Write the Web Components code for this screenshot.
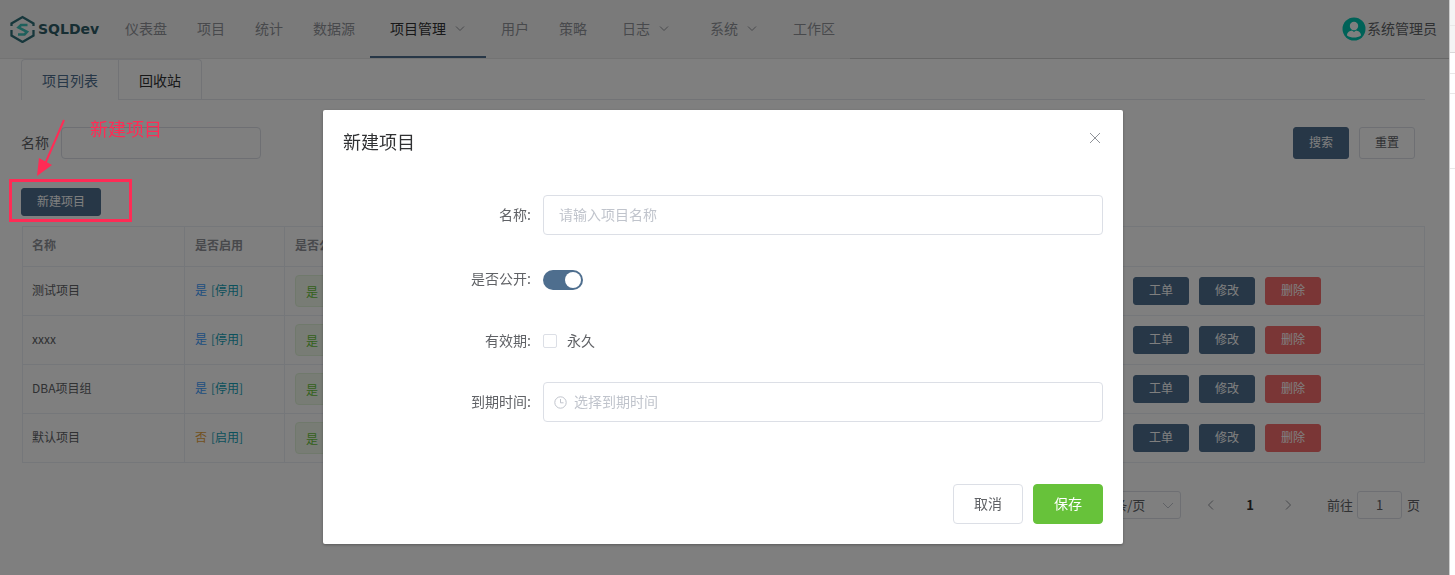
<!DOCTYPE html>
<html lang="zh">
<head>
<meta charset="utf-8">
<title>SQLDev</title>
<style>
  html, body { margin: 0; height: 100%; overflow: hidden; background: #fff; }
  body {
    display: flex;
    font-family: "Noto Sans CJK SC", "Liberation Sans", sans-serif;
    font-size: 14px;
    color: #606266;
  }
  main { width: 1449px; flex: none; }
</style>
</head>
<body>
<main>
  <app-header>
    <nav-item>仪表盘</nav-item>
    <nav-item>项目</nav-item>
    <nav-item>统计</nav-item>
    <nav-item>数据源</nav-item>
    <nav-item active arrow>项目管理</nav-item>
    <nav-item>用户</nav-item>
    <nav-item>策略</nav-item>
    <nav-item arrow>日志</nav-item>
    <nav-item arrow>系统</nav-item>
    <nav-item>工作区</nav-item>
  </app-header>
  <tab-bar></tab-bar>
  <filter-bar></filter-bar>
  <div style="margin:29px 0 10px 21px;height:28px"><ui-button kind="primary" size="small">新建项目</ui-button></div>
  <project-table>
    <project-row name="测试项目" enabled></project-row>
    <project-row name="xxxx" enabled></project-row>
    <project-row name="DBA项目组" enabled></project-row>
    <project-row name="默认项目"></project-row>
  </project-table>
  <pager-bar></pager-bar>
</main>
<page-edge></page-edge>

<modal-dialog heading="新建项目">
  <form-row label="名称:" gap="24"><text-field placeholder="请输入项目名称"></text-field></form-row>
  <form-row label="是否公开:" gap="22"><toggle-switch></toggle-switch></form-row>
  <form-row label="有效期:" gap="21"><check-box>永久</check-box></form-row>
  <form-row label="到期时间:" gap="0"><text-field placeholder="选择到期时间" clock></text-field></form-row>
  <ui-button slot="footer" kind="plain" size="large">取消</ui-button>
  <ui-button slot="footer" kind="success" size="large">保存</ui-button>
</modal-dialog>

<note-callout></note-callout>

<script>
const chevron = (points) => `<svg width="12" height="12" viewBox="0 0 12 12" fill="none" stroke="currentColor" stroke-width="1"><polyline points="${points}"/></svg>`;

class AppHeader extends HTMLElement {
  constructor() {
    super();
    this.attachShadow({ mode: "open" });
  }

  connectedCallback() {
    this.shadowRoot.innerHTML = `
      <style>
        :host {
          display: flex;
          height: 58px;
          background: #f5f5f5;
          border-bottom: 1px solid #e6e6e6;
          border-image: linear-gradient(90deg, #e6e6e6 850px, #cfcfcf 850px) 1;
        }
        .logo { width: 110px; flex: none; display: flex; align-items: center; gap: 3px; padding-left: 9px; box-sizing: border-box; }
        .logo b { font: bold 14px "DejaVu Sans", sans-serif; color: #2e5c66; }
        nav { display: flex; flex: 1; }
        .user { display: flex; align-items: center; padding-right: 12px; color: #606266; }
        .user span { padding-bottom: 2px; }
        .user svg { display: block; margin-right: 1px; }
      </style>
      <div class="logo">
        <svg width="26" height="28" viewBox="0 0 26 28" fill="none">
          <path d="M2.500 11 V8.500 L13.500 2 L24.500 8.500 V11 M2.500 15 V20.500 L13.500 27 L24.500 20.500 V15" stroke="#2f6f78" stroke-width="2.300"/>
          <path d="M18.500 10 H12 L9.500 12.500 L18 16.800 L15.500 19.500 H9" stroke="#3cc0b8" stroke-width="2.600"/>
        </svg>
        <b>SQLDev</b>
      </div>
      <nav><slot></slot></nav>
      <div class="user">
        <svg width="24" height="24" viewBox="0 0 24 24">
          <circle cx="12" cy="12" r="11.500" fill="#00c4b0"/>
          <circle cx="12" cy="9" r="4.200" fill="#fff"/>
          <path d="M5 18.500 C5 15 8 13.800 10 13.500 L12 15 L14 13.500 C16 13.800 19 15 19 18.500 C17 20 14.500 20.600 12 20.600 C9.500 20.600 7 20 5 18.500 Z" fill="#fff"/>
        </svg>
        <span>系统管理员</span>
      </div>
    `;
  }
}

class NavItem extends HTMLElement {
  constructor() {
    super();
    this.attachShadow({ mode: "open" });
  }

  connectedCallback() {
    const arrow = this.hasAttribute("arrow");
    this.shadowRoot.innerHTML = `
      <style>
        :host {
          display: flex;
          align-items: center;
          gap: 8px;
          height: 58px;
          box-sizing: border-box;
          padding: 0 ${arrow ? 20 : 15}px;
          color: #909399;
          border-bottom: 2px solid transparent;
        }
        :host([active]) { color: #303133; border-bottom-color: #4e6e8e; }
        svg { display: block; color: #909399; }
      </style>
      <slot></slot>${arrow ? chevron("2,4.500 6,8.500 10,4.500") : ""}
    `;
  }
}

class TabBar extends HTMLElement {
  constructor() {
    super();
    this.attachShadow({ mode: "open" });
  }

  connectedCallback() {
    this.shadowRoot.innerHTML = `
      <style>
        :host {
          display: flex;
          height: 40px;
          margin: 0 24px 0 21px;
          border-bottom: 1px solid #e4e7ed;
        }
        .tab {
          padding: 0 20px;
          height: 40px;
          box-sizing: border-box;
          display: flex;
          align-items: center;
          border: 1px solid #e4e7ed;
          border-bottom: 0;
          color: #303133;
        }
        .tab.active { color: #4e6e8e; border-right: 0; height: 41px; background: #fff; border-radius: 4px 0 0 0; }
        .tab:last-child { border-radius: 0 4px 0 0; }
      </style>
      <div class="tab active">项目列表</div>
      <div class="tab">回收站</div>
    `;
  }
}

class FilterBar extends HTMLElement {
  constructor() {
    super();
    this.attachShadow({ mode: "open" });
  }

  connectedCallback() {
    this.shadowRoot.innerHTML = `
      <style>
        :host {
          display: flex;
          align-items: center;
          gap: 12px;
          height: 32px;
          margin-top: 27px;
          padding: 0 34px 0 21px;
        }
        span { padding-bottom: 2px; }
        .box { width: 200px; height: 32px; box-sizing: border-box; border: 1px solid #dcdfe6; border-radius: 4px; background: #fff; }
        .grow { flex: 1; }
        .actions { display: flex; gap: 10px; }
      </style>
      <span>名称</span>
      <div class="box"></div>
      <div class="grow"></div>
      <div class="actions">
        <ui-button kind="primary" size="medium">搜索</ui-button>
        <ui-button kind="plain" size="medium">重置</ui-button>
      </div>
    `;
  }
}

class UiButton extends HTMLElement {
  constructor() {
    super();
    this.attachShadow({ mode: "open" });
  }

  connectedCallback() {
    this.shadowRoot.innerHTML = `
      <style>
        :host {
          display: inline-flex;
          align-items: center;
          justify-content: center;
          box-sizing: border-box;
          border-radius: 3px;
          border: 1px solid #4e6e8e;
          background: #4e6e8e;
          color: #fff;
          width: 56px;
          height: 28px;
          padding-bottom: 4px;
          font-size: 12px;
        }
        :host([size="small"]) { width: 80px; }
        :host([size="medium"]) { height: 32px; }
        :host([size="large"]) { width: 70px; height: 40px; padding-bottom: 2px; font-size: 14px; border-radius: 4px; }
        :host([kind="plain"]) { background: #fff; border-color: #dcdfe6; color: #606266; }
        :host([kind="danger"]) { background: #f56c6c; border-color: #f56c6c; }
        :host([kind="success"]) { background: #67c23a; border-color: #67c23a; }
      </style>
      <slot></slot>
    `;
  }
}

class ProjectTable extends HTMLElement {
  constructor() {
    super();
    this.attachShadow({ mode: "open" });
  }

  connectedCallback() {
    this.shadowRoot.innerHTML = `
      <style>
        :host {
          display: block;
          margin: 0 24px 0 22px;
          border: 1px solid #ebeef5;
          border-bottom: 0;
          font-size: 12px;
        }
        .head {
          display: grid;
          grid-template-columns: 162px 100px 1fr 302px;
          height: 40px;
          box-sizing: border-box;
          border-bottom: 1px solid #ebeef5;
          color: #909399;
          font-weight: 700;
          align-items: stretch;
        }
        .head div { display: flex; align-items: center; padding: 0 0 4px 10px; border-right: 1px solid #ebeef5; }
        .head div:first-child { padding-left: 9px; }
        .head div:last-child { border-right: 0; }
      </style>
      <div class="head"><div>名称</div><div>是否启用</div><div>是否公开</div><div></div></div>
      <slot></slot>
    `;
  }
}

class ProjectRow extends HTMLElement {
  constructor() {
    super();
    this.attachShadow({ mode: "open" });
  }

  connectedCallback() {
    const on = this.hasAttribute("enabled");
    this.shadowRoot.innerHTML = `
      <style>
        :host {
          display: grid;
          grid-template-columns: 162px 100px 1fr 302px;
          height: 49px;
          box-sizing: border-box;
          border-bottom: 1px solid #ebeef5;
        }
        .cell { display: flex; align-items: center; padding-left: 10px; border-right: 1px solid #ebeef5; }
        .name { padding: 0 0 4px 9px; }
        .state { padding-bottom: 4px; }
        .ops { border-right: 0; gap: 10px; padding-left: 11px; }
        .yes { color: #409eff; }
        .no { color: #e6a23c; }
        .link { color: #17a2b8; margin-left: 4px; }
        .tag {
          display: inline-flex; align-items: center; height: 32px; box-sizing: border-box; padding: 0 10px;
          background: #f0f9eb; border: 1px solid #e1f3d8; border-radius: 4px; color: #67c23a;
        }
      </style>
      <div class="cell name">${this.getAttribute("name")}</div>
      <div class="cell state"><span class="${on ? "yes" : "no"}">${on ? "是" : "否"}</span><span class="link">[${on ? "停用" : "启用"}]</span></div>
      <div class="cell"><span class="tag">是</span></div>
      <div class="cell ops">
        <ui-button kind="primary">工单</ui-button>
        <ui-button kind="primary">修改</ui-button>
        <ui-button kind="danger">删除</ui-button>
      </div>
    `;
  }
}

class PagerBar extends HTMLElement {
  constructor() {
    super();
    this.attachShadow({ mode: "open" });
  }

  connectedCallback() {
    this.shadowRoot.innerHTML = `
      <style>
        :host {
          display: flex;
          justify-content: flex-end;
          align-items: center;
          height: 28px;
          margin-top: 28px;
          padding-right: 29px;
          font-size: 13px;
          color: #606266;
        }
        span { padding-bottom: 2px; }
        .select {
          width: 100px; height: 28px; box-sizing: border-box; border: 1px solid #dcdfe6; border-radius: 3px;
          display: flex; align-items: center; justify-content: flex-end; gap: 17px; padding-right: 6px; color: #606266;
        }
        .select svg { color: #c0c4cc; }
        .prev, .next { width: 12px; height: 12px; color: #909399; }
        .prev { margin-left: 24px; }
        .num { margin: 0 28px 0 29px; font-weight: 700; color: #303133; }
        .next { margin-right: 33px; }
        .jump {
          width: 45px; height: 28px; margin: 0 5px 0 4px; box-sizing: border-box; border: 1px solid #dcdfe6; border-radius: 3px;
          display: flex; align-items: center; justify-content: center;
        }
        svg { display: block; }
      </style>
      <div class="select"><span>条/页</span>${chevron("1,4 6,9 11,4")}</div>
      <div class="prev">${chevron("8,1.500 3.500,6 8,10.500")}</div>
      <span class="num">1</span>
      <div class="next">${chevron("4,1.500 8.500,6 4,10.500")}</div>
      <span>前往</span><div class="jump"><span>1</span></div><span>页</span>
    `;
  }
}

class PageEdge extends HTMLElement {
  constructor() {
    super();
    this.attachShadow({ mode: "open" });
  }

  connectedCallback() {
    this.shadowRoot.innerHTML = `
      <style>
        :host { display: block; width: 6px; height: 575px; flex: none; box-sizing: border-box; border-left: 1px solid #cccccc; background: #fff; }
        div { box-sizing: border-box; border-bottom: 1px solid #e8e8e8; }
        .top { background: #f4f4f4; }
      </style>
      <div class="top" style="height:26px"></div>
      <div class="top" style="height:27px;border-color:#d8d8d8"></div>
      <div style="height:21px"></div>
      <div style="height:20px"></div>
      <div style="height:75px"></div>
    `;
  }
}

class ModalDialog extends HTMLElement {
  constructor() {
    super();
    this.attachShadow({ mode: "open" });
  }

  connectedCallback() {
    this.shadowRoot.innerHTML = `
      <style>
        :host {
          position: fixed;
          left: 0;
          top: 0;
          width: 1449px;
          height: 575px;
          background: rgba(0, 0, 0, .5);
          display: block;
        }
        .dialog {
          width: 800px;
          height: 434px;
          margin: 110px 0 0 323px;
          box-sizing: border-box;
          background: #fff;
          border-radius: 2px;
          box-shadow: 0 1px 3px rgba(0, 0, 0, .3);
          display: flex;
          flex-direction: column;
        }
        header { display: flex; justify-content: space-between; height: 85px; padding: 19px 22px 0 20px; box-sizing: border-box; }
        h2 { margin: 0; font-size: 18px; font-weight: 400; line-height: 24px; color: #303133; }
        .close { margin-top: 3px; color: #909399; }
        .close svg { display: block; }
        .body { flex: 1; padding-right: 20px; }
        footer { display: flex; justify-content: flex-end; gap: 10px; padding: 0 20px 20px; }
      </style>
      <div class="dialog">
        <header>
          <h2>${this.getAttribute("heading")}</h2>
          <div class="close"><svg width="12" height="12" viewBox="0 0 12 12" stroke="currentColor" fill="none"><path d="M1 1 L11 11 M11 1 L1 11"/></svg></div>
        </header>
        <div class="body"><slot></slot></div>
        <footer><slot name="footer"></slot></footer>
      </div>
    `;
  }
}

class FormRow extends HTMLElement {
  constructor() {
    super();
    this.attachShadow({ mode: "open" });
  }

  connectedCallback() {
    this.shadowRoot.innerHTML = `
      <style>
        :host {
          display: flex;
          align-items: center;
          height: 40px;
          margin-bottom: ${this.getAttribute("gap")}px;
        }
        label { width: 220px; flex: none; padding: 0 12px 3px 0; box-sizing: border-box; text-align: right; color: #606266; }
        .field { flex: 1; display: flex; align-items: center; }
      </style>
      <label>${this.getAttribute("label")}</label>
      <div class="field"><slot></slot></div>
    `;
  }
}

class TextField extends HTMLElement {
  constructor() {
    super();
    this.attachShadow({ mode: "open" });
  }

  connectedCallback() {
    const clock = this.hasAttribute("clock");
    this.shadowRoot.innerHTML = `
      <style>
        :host {
          display: flex;
          align-items: center;
          flex: 1;
          height: 40px;
          box-sizing: border-box;
          padding-left: ${clock ? 10 : 15}px;
          gap: 7px;
          border: 1px solid #dcdfe6;
          border-radius: 4px;
          color: #c0c4cc;
        }
        span { padding-bottom: 2px; }
        svg { display: block; }
      </style>
      ${clock ? `<svg width="13" height="13" viewBox="0 0 13 13" fill="none" stroke="currentColor"><circle cx="6.500" cy="6.500" r="5.700"/><path d="M6.500 3 V6.800 H9.500"/></svg>` : ""}
      <span>${this.getAttribute("placeholder")}</span>
    `;
  }
}

class ToggleSwitch extends HTMLElement {
  constructor() {
    super();
    this.attachShadow({ mode: "open" });
  }

  connectedCallback() {
    this.shadowRoot.innerHTML = `
      <style>
        :host {
          display: flex;
          justify-content: flex-end;
          align-items: center;
          width: 40px;
          height: 20px;
          margin-top: 2px;
          padding-right: 2px;
          box-sizing: border-box;
          border-radius: 10px;
          background: #4e6e8e;
        }
        i { width: 16px; height: 16px; border-radius: 50%; background: #fff; }
      </style>
      <i></i>
    `;
  }
}

class CheckBox extends HTMLElement {
  constructor() {
    super();
    this.attachShadow({ mode: "open" });
  }

  connectedCallback() {
    this.shadowRoot.innerHTML = `
      <style>
        :host { display: flex; align-items: center; gap: 10px; color: #606266; }
        i { width: 14px; height: 14px; box-sizing: border-box; border: 1px solid #dcdfe6; border-radius: 2px; background: #fff; }
        span { padding-bottom: 3px; }
      </style>
      <i></i><span><slot></slot></span>
    `;
  }
}

class NoteCallout extends HTMLElement {
  constructor() {
    super();
    this.attachShadow({ mode: "open" });
  }

  connectedCallback() {
    this.shadowRoot.innerHTML = `
      <style>
        :host { display: block; position: fixed; left: 0; top: 0; width: 0; height: 0; color: #ff2b55; }
        .frame { position: absolute; left: 9px; top: 179px; width: 123px; height: 43px; box-sizing: border-box; border: 3px solid #ff2b55; }
        .text { position: absolute; left: 90px; top: 115px; font-size: 18px; line-height: 26px; white-space: nowrap; }
        svg { position: absolute; left: 0; top: 0; }
      </style>
      <svg width="140" height="230" viewBox="0 0 140 230" fill="none">
        <path d="M64 120 L45 164" stroke="#ff2b55" stroke-width="2"/>
        <path d="M37 176 L39 158 L52 165 Z" fill="#ff2b55"/>
      </svg>
      <div class="text">新建项目</div>
      <div class="frame"></div>
    `;
  }
}

customElements.define("app-header", AppHeader);
customElements.define("nav-item", NavItem);
customElements.define("tab-bar", TabBar);
customElements.define("filter-bar", FilterBar);
customElements.define("ui-button", UiButton);
customElements.define("project-table", ProjectTable);
customElements.define("project-row", ProjectRow);
customElements.define("pager-bar", PagerBar);
customElements.define("page-edge", PageEdge);
customElements.define("modal-dialog", ModalDialog);
customElements.define("form-row", FormRow);
customElements.define("text-field", TextField);
customElements.define("toggle-switch", ToggleSwitch);
customElements.define("check-box", CheckBox);
customElements.define("note-callout", NoteCallout);
</script>
</body>
</html>
